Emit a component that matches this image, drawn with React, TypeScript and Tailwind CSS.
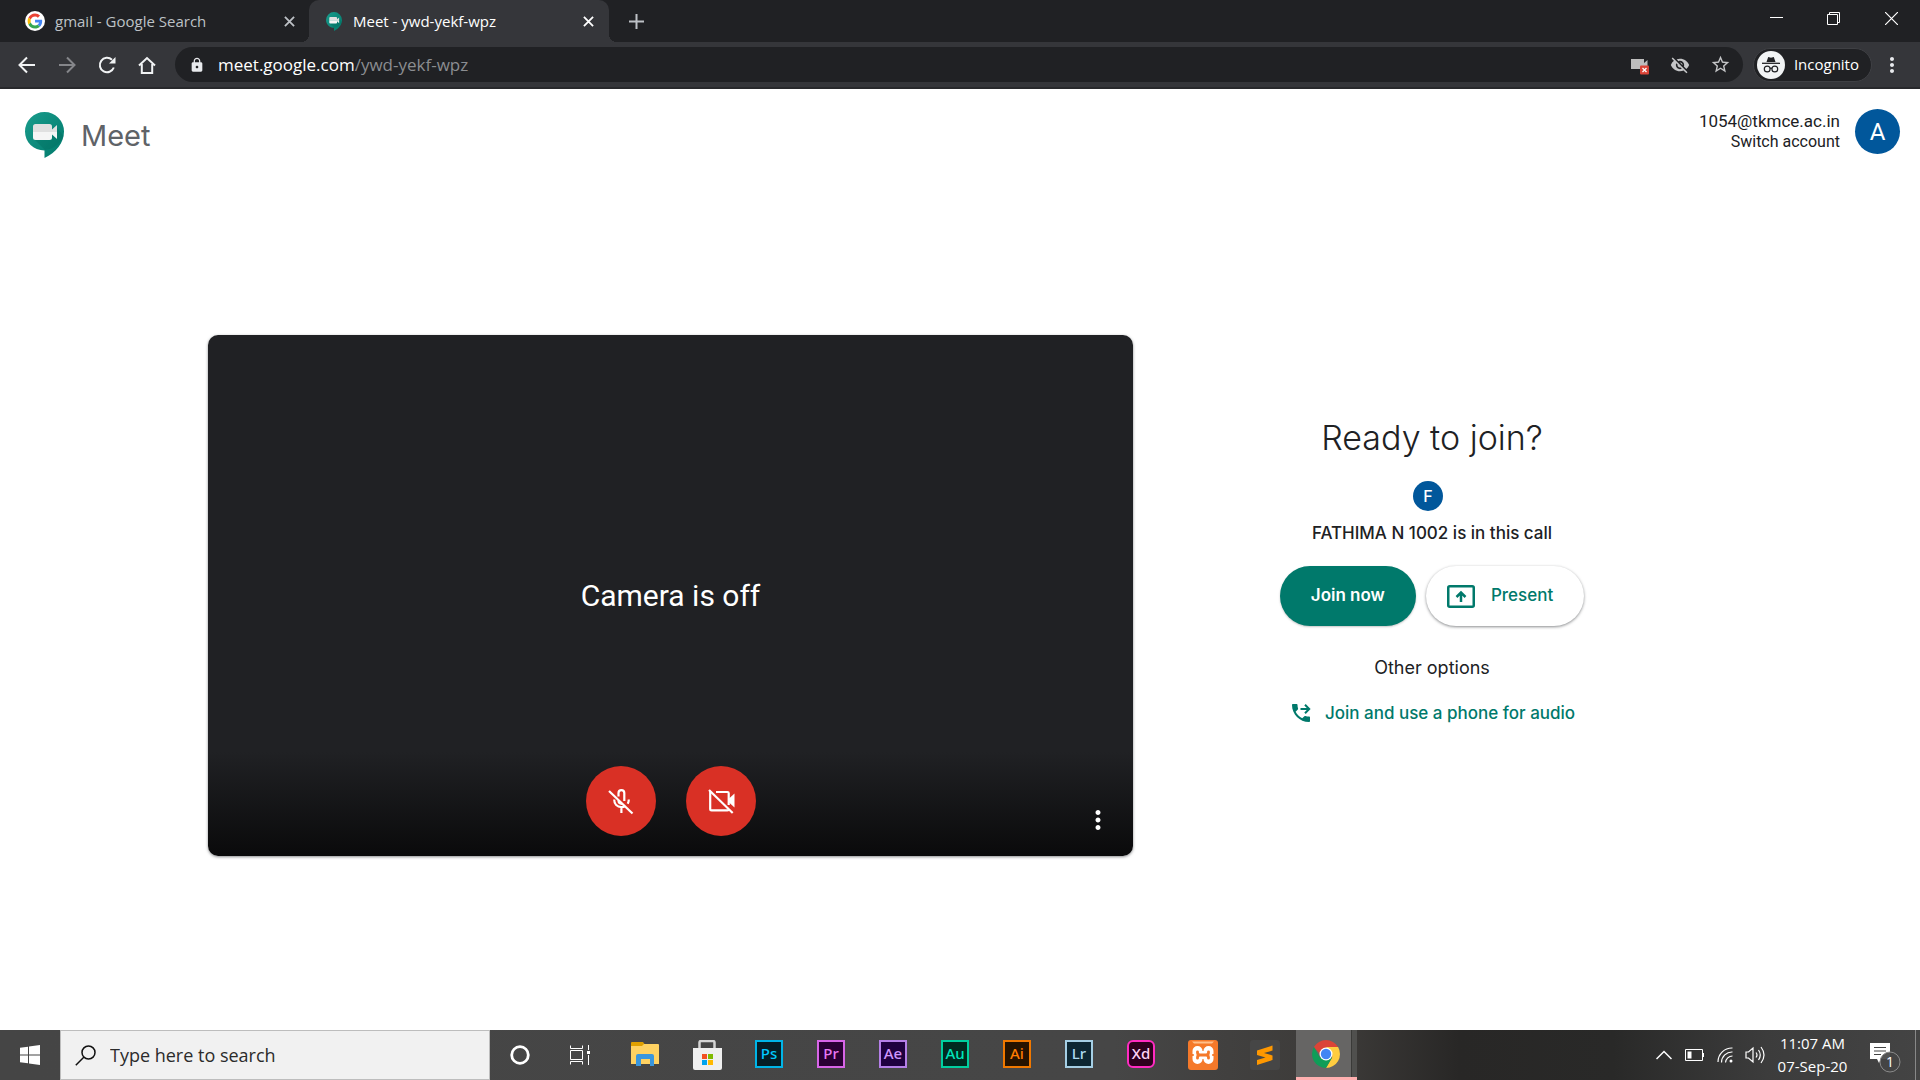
import type { ReactNode } from "react";
import { MdLock, MdStarBorder, MdVisibilityOff, MdMoreVert } from "react-icons/md";

function GoogleG() {
  return (
    <svg viewBox="0 0 20 20" className="size-5 shrink-0" aria-hidden="true">
      <circle cx="10" cy="10" r="10" fill="#fff" />
      <g transform="translate(2.6 2.6) scale(.31)">
        <path fill="#EA4335" d="M24 9.500c3.540 0 6.710 1.220 9.210 3.600l6.850-6.850C35.900 2.380 30.470 0 24 0 14.620 0 6.510 5.380 2.560 13.220l7.980 6.190C12.430 13.720 17.740 9.500 24 9.500z" />
        <path fill="#4285F4" d="M46.980 24.550c0-1.570-.15-3.090-.38-4.550H24v9.020h12.940c-.58 2.960-2.260 5.480-4.780 7.180l7.730 6c4.510-4.180 7.090-10.360 7.090-17.650z" />
        <path fill="#FBBC05" d="M10.530 28.590c-.48-1.450-.76-2.990-.76-4.590s.27-3.140.76-4.590l-7.980-6.190C.92 16.460 0 20.120 0 24s.92 7.540 2.560 10.780l7.970-6.190z" />
        <path fill="#34A853" d="M24 48c6.480 0 11.930-2.130 15.890-5.810l-7.730-6c-2.150 1.450-4.920 2.300-8.160 2.300-6.260 0-11.570-4.220-13.470-9.910l-7.980 6.190C6.510 42.620 14.620 48 24 48z" />
      </g>
    </svg>
  );
}

function MeetLogo({ className }: { className: string }) {
  return (
    <svg viewBox="0 0 39 46" className={className} aria-hidden="true">
      <defs>
        <linearGradient id="bubble" x1="0" y1="0" x2="1" y2="1">
          <stop offset="0" stopColor="#1a9c8c" />
          <stop offset="1" stopColor="#00796b" />
        </linearGradient>
      </defs>
      <path d="M19.500 0A19.500 19.500 0 0 0 0 19.500C0 30 8.500 38.500 19.500 38.500V46C31 40.500 39 31 39 19.500A19.500 19.500 0 0 0 19.500 0z" fill="url(#bubble)" />
      <path d="M9 27l11 11c9-1 16-7 18.500-14l-7-9-5 11z" fill="#00695c" opacity=".35" />
      <path d="M10.500 12h14a2.500 2.500 0 0 1 2.500 2.500v3l5-4.500v7H8v-5.500A2.500 2.500 0 0 1 10.500 12z" fill="#e0e0e0" />
      <path d="M8 20h24v7l-5-4.500v3a2.500 2.500 0 0 1-2.500 2.500h-14A2.500 2.500 0 0 1 8 25.500z" fill="#f5f5f5" />
    </svg>
  );
}

function CloseIcon({ className }: { className: string }) {
  return (
    <svg viewBox="0 0 12 12" className={className} stroke="currentColor" strokeWidth="2" aria-hidden="true">
      <path d="M1 1l10 10M11 1L1 11" />
    </svg>
  );
}

function NavIcon({ children, dim }: { children: ReactNode; dim?: boolean }) {
  return (
    <svg viewBox="0 0 20 20" className={dim ? "size-5 text-[#85868a]" : "size-5 text-[#f1f3f4]"} fill="none" stroke="currentColor" strokeWidth="2" aria-hidden="true">
      {children}
    </svg>
  );
}

function TabStrip() {
  return (
    <div className="flex h-[42px] bg-[#202124]">
      <div className="flex w-[309px] items-center pr-[14px] pl-[25px] text-[15px] text-[#bdc1c6]">
        <GoogleG />
        <span className="ml-[10px] flex-1 leading-5 whitespace-nowrap">gmail - Google Search</span>
        <button aria-label="Close gmail tab"><CloseIcon className="size-[11px]" /></button>
      </div>
      <div className="relative flex w-[300px] items-center rounded-t-[10px] bg-[#35363a] pr-[15px] pl-[17px] text-[15px] text-white">
        <span className="absolute bottom-0 -left-2 size-2 bg-[radial-gradient(circle_at_0_0,#202124_8px,#35363a_8px)]" />
        <span className="absolute -right-2 bottom-0 size-2 bg-[radial-gradient(circle_at_100%_0,#202124_8px,#35363a_8px)]" />
        <MeetLogo className="h-[19px] w-4" />
        <span className="ml-[11px] flex-1 leading-5 whitespace-nowrap">Meet - ywd-yekf-wpz</span>
        <button aria-label="Close Meet tab"><CloseIcon className="size-[11px]" /></button>
      </div>
      <button aria-label="New tab" className="ml-5 text-[#bdc1c6]">
        <svg viewBox="0 0 15 15" className="size-[15px]" stroke="currentColor" strokeWidth="2" aria-hidden="true"><path d="M7.500 0v15M0 7.500h15" /></svg>
      </button>
      <div className="ml-auto flex h-9 text-white">
        <button aria-label="Minimize" className="flex w-[57px] items-center justify-center">
          <svg viewBox="0 0 13 13" className="size-[13px]" stroke="currentColor" aria-hidden="true"><path d="M0 5.500h13" /></svg>
        </button>
        <button aria-label="Restore" className="flex w-[57px] items-center justify-center">
          <svg viewBox="0 0 13 13" className="size-[13px]" fill="none" stroke="currentColor" aria-hidden="true"><path d="M.5 2.500h10v10H.5zM2.500 2.500v-2h10v10h-2" /></svg>
        </button>
        <button aria-label="Close window" className="flex w-[58px] items-center justify-center">
          <svg viewBox="0 0 13 13" className="size-[13px]" stroke="currentColor" strokeWidth="1.200" aria-hidden="true"><path d="M0 0l13 13M13 0L0 13" /></svg>
        </button>
      </div>
    </div>
  );
}

function Toolbar() {
  return (
    <div className="flex h-[47px] items-center border-b-2 border-[#28292c] bg-[#35363a] pr-4 pl-[17px]">
      <div className="flex gap-5">
        <button aria-label="Back"><NavIcon><path d="M18 10H3M10 2.500L2.500 10l7.500 7.500" /></NavIcon></button>
        <button aria-label="Forward"><NavIcon dim><path d="M2 10h15M10 2.500l7.500 7.500-7.500 7.500" /></NavIcon></button>
        <button aria-label="Reload"><NavIcon><path d="M16.800 12.500A7.200 7.200 0 1 1 15 4.800" /><path d="M18.500 2v6.500H12z" fill="currentColor" stroke="none" /></NavIcon></button>
        <button aria-label="Home"><NavIcon><path d="M2 10.500L10 3l8 7.500M4.800 9v9h10.400V9" /></NavIcon></button>
      </div>
      <div className="ml-[18px] flex h-[35px] flex-1 items-center rounded-full bg-[#202124] pr-3 pl-[14px] text-[#c4c5c7]">
        <MdLock className="size-4 text-[#e8eaed]" />
        <div className="ml-[13px] flex-1 text-[17px] text-[#8b8d91]"><span className="text-white">meet.google.com</span>/ywd-yekf-wpz</div>
        <div className="flex items-center gap-5">
          <button aria-label="Camera blocked">
            <svg viewBox="0 0 20 20" className="size-5" aria-hidden="true">
              <path d="M1 4h13v4l3.500-3v9H1z" fill="#bdbdbd" />
              <rect x="10" y="10.500" width="9" height="9" rx="1" fill="#db4437" />
              <path d="M12.500 13l4 4M16.500 13l-4 4" stroke="#fff" strokeWidth="1.300" />
            </svg>
          </button>
          <button aria-label="Third-party cookies blocked"><MdVisibilityOff className="size-5" /></button>
          <button aria-label="Bookmark this page"><MdStarBorder className="size-[21px]" /></button>
        </div>
      </div>
      <button className="ml-[10px] flex h-[34px] items-center rounded-full border border-[#3f4044] bg-[#202124] pr-3 pl-[3px] text-[15px] text-white">
        <svg viewBox="0 0 28 28" className="size-7" aria-hidden="true">
          <circle cx="14" cy="14" r="14" fill="#f1f3f4" />
          <path d="M9.500 11l1.700-5 2.800.8 2.800-.8 1.700 5z" fill="#202124" />
          <path d="M5 12.300h18" stroke="#202124" strokeWidth="1.300" />
          <g fill="none" stroke="#202124" strokeWidth="1.200"><circle cx="10.200" cy="18" r="2.900" /><circle cx="17.800" cy="18" r="2.900" /><path d="M13 17.500q1-.7 2 0" /></g>
        </svg>
        <span className="ml-[9px]">Incognito</span>
      </button>
      <button aria-label="Browser menu" className="ml-2 text-[#e8eaed]"><MdMoreVert className="size-6" /></button>
    </div>
  );
}

function MicOffIcon() {
  return (
    <svg viewBox="0 0 30 30" className="size-[30px]" fill="none" stroke="currentColor" strokeWidth="2.200" aria-hidden="true">
      <path d="M12.500 10.500V7a2.900 2.900 0 0 1 5.800 0v8" />
      <path d="M12.500 14.500c0 2 1.300 3.300 3.500 3.300" />
      <path d="M8.200 13.500c0 4.800 3 7.600 7.200 7.600 1.500 0 2.800-.4 3.800-1.100M15.400 21v6M22.800 13.500c0 1.700-.4 3-1.100 4.200" />
      <path d="M3 5l23.500 22.500" />
    </svg>
  );
}

function CameraOffIcon() {
  return (
    <svg viewBox="0 0 30 30" className="size-[30px]" fill="none" stroke="currentColor" strokeWidth="2.200" aria-hidden="true">
      <path d="M10 6h11.500q1.200 0 1.200 1.200V19" />
      <path d="M4.200 5v18q0 1.400 1.400 1.400h15.600q1 0 1.500-.8" />
      <path d="M22.500 13l6-5.500v14l-6-5.500z" fill="currentColor" stroke="none" />
      <path d="M3 4l23.700 23" />
    </svg>
  );
}

function MeetPage() {
  return (
    <main className="flex flex-1 flex-col bg-white font-['Roboto',sans-serif] text-[#202124]">
      <header className="flex h-[72px] items-start justify-between pr-5 pl-[25px]">
        <div className="flex items-center pt-[22px]">
          <MeetLogo className="h-[46px] w-[39px]" />
          <h1 className="ml-[17px] pt-0.5 font-['Inter',sans-serif] text-[29px] leading-[46px] text-[#5f6368]">Meet</h1>
        </div>
        <div className="flex items-center gap-[15px] pt-5">
          <div className="text-right">
            <div className="text-[17px] leading-[21px]">1054@tkmce.ac.in</div>
            <a href="#switch" className="block text-base leading-5">Switch account</a>
          </div>
          <button aria-label="Account" className="size-[45px] rounded-full bg-[#01579b] text-[24px] text-white">A</button>
        </div>
      </header>
      <section className="flex flex-1 items-center pr-[189px] pl-[208px]">
        <div className="relative flex aspect-[925/521] flex-1 items-center justify-center rounded-[10px] bg-[linear-gradient(to_bottom,#202124_80%,#0a0a0b)] shadow-[0_1px_3px_rgba(60,64,67,.6)]">
          <p className="text-[30px] text-white">Camera is off</p>
          <div className="absolute inset-x-0 bottom-5 flex justify-center gap-[30px] text-white">
            <button aria-label="Turn on microphone" className="flex size-[70px] items-center justify-center rounded-full bg-[#d93025]"><MicOffIcon /></button>
            <button aria-label="Turn on camera" className="flex size-[70px] items-center justify-center rounded-full bg-[#d93025]"><CameraOffIcon /></button>
          </div>
          <button aria-label="More options" className="absolute right-5 bottom-[21px] text-white"><MdMoreVert className="size-[30px]" /></button>
        </div>
        <div className="flex w-[598px] flex-col items-center pb-[50px] font-['Inter',sans-serif] text-[17px] font-medium">
          <h2 className="text-[34px] leading-[44px] font-light">Ready to join?</h2>
          <div className="mt-[21px] mr-2 flex size-[30px] items-center justify-center rounded-full bg-[#01579b] text-base text-white">F</div>
          <p className="mt-[10px] leading-6">FATHIMA N 1002 is in this call</p>
          <div className="mt-[21px] flex gap-[10px]">
            <button className="h-[60px] rounded-full bg-[#00796b] px-[31px] font-semibold text-white shadow-[0_1px_2px_rgba(60,64,67,.3)]">Join now</button>
            <button className="flex h-[60px] items-center rounded-full pr-[31px] pl-[21px] text-[#00796b] shadow-[0_1px_3px_rgba(60,64,67,.6)]">
              <svg viewBox="0 0 28 23" className="h-[23px] w-7" fill="none" stroke="currentColor" strokeWidth="2.500" aria-hidden="true">
                <rect x="1.250" y="1.250" width="25.500" height="20.500" rx="1.500" />
                <path d="M14 17V8.500M9.500 12L14 7.500l4.500 4.500" />
              </svg>
              <span className="ml-4">Present</span>
            </button>
          </div>
          <p className="mt-[30px] text-lg leading-6 font-normal">Other options</p>
          <button className="mt-[21px] flex items-center leading-6 text-[#00796b]">
            <svg viewBox="0 0 24 24" className="size-6" fill="currentColor" aria-hidden="true">
              <path d="M20 15.500c-1.250 0-2.450-.2-3.570-.57-.35-.11-.74-.03-1.020.24l-2.200 2.200c-2.830-1.440-5.150-3.750-6.590-6.580l2.200-2.210c.28-.27.36-.66.250-1.010C8.700 6.450 8.500 5.250 8.500 4c0-.55-.45-1-1-1H4c-.55 0-1 .45-1 1 0 9.390 7.610 17 17 17 .55 0 1-.45 1-1v-3.500c0-.55-.45-1-1-1z" />
              <path d="M11.500 8h8M16 3.800L20.200 8 16 12.200" fill="none" stroke="currentColor" strokeWidth="2" />
            </svg>
            <span className="ml-3">Join and use a phone for audio</span>
          </button>
        </div>
      </section>
    </main>
  );
}

function Adobe({ label, tone }: { label: string; tone: string }) {
  return <span className={`flex size-7 items-center justify-center border-2 font-['Noto_Sans',sans-serif] text-[15px] leading-none font-medium ${tone}`}>{label}</span>;
}

const adobeApps = [
  { label: "Ps", tone: "border-[#00b5e8] bg-[#061e26] text-[#00c8ff]" },
  { label: "Pr", tone: "border-[#d865e8] bg-[#2a0034] text-[#e878f5]" },
  { label: "Ae", tone: "border-[#b57fe8] bg-[#1f0040] text-[#cf96fd]" },
  { label: "Au", tone: "border-[#00cf9f] bg-[#002a20] text-[#00e4bb]" },
  { label: "Ai", tone: "border-[#f07800] bg-[#261300] text-[#ff7c00]" },
  { label: "Lr", tone: "border-[#a5cfe5] bg-[#0d2733] text-[#addbf0]" },
  { label: "Xd", tone: "rounded-[6px] border-[#ff2bc2] bg-[#2e001e] text-[#ffd4f5]" },
];

function TaskIcon({ name, children }: { name: string; children: ReactNode }) {
  return <button aria-label={name} className="flex w-[62px] items-center justify-center pb-[3px]">{children}</button>;
}

function Taskbar() {
  return (
    <footer className="flex h-[50px] bg-[linear-gradient(to_right,#454545_0%,#464646_58%,#3c3a38_70%,#282726_76%,#292928_84%,#3c3c3c_92%,#444_100%)] text-white">
      <button aria-label="Start" className="flex w-[60px] items-center justify-center">
        <svg viewBox="0 0 20 20" className="size-5" fill="currentColor" aria-hidden="true"><path d="M0 2.800L8 1.700v7.800H0zM9 1.500L20 0v9.500H9zM0 10.500h8v7.800l-8-1.100zM9 10.500h11V20L9 18.500z" /></svg>
      </button>
      <label className="flex w-[430px] items-center border border-[#bdbdbd] bg-[#f1f1f1] pl-[14px] text-[#222]">
        <svg viewBox="0 0 21 21" className="size-[21px]" fill="none" stroke="#111" strokeWidth="1.500" aria-hidden="true"><circle cx="13.500" cy="7.500" r="6.500" /><path d="M9 12L.8 20.200" /></svg>
        <input type="text" aria-label="Search Windows" placeholder="Type here to search" className="ml-[14px] flex-1 bg-transparent text-[18px] outline-none placeholder:text-[#2b2b2b]" />
      </label>
      <button aria-label="Cortana" className="flex w-[60px] items-center justify-center">
        <svg viewBox="0 0 20 20" className="size-5" fill="none" stroke="currentColor" strokeWidth="2.800" aria-hidden="true"><circle cx="10" cy="10" r="8.300" /></svg>
      </button>
      <button aria-label="Task view" className="flex w-[60px] items-center justify-center">
        <svg viewBox="0 0 20 20" className="size-5" fill="none" stroke="currentColor" aria-hidden="true"><path d="M.5.500v3h12v-3M.5 5.500h12v9H.5zM.5 19.500v-3h12v3M18.500 0v5M18.500 10v10" /><path d="M17 6h3v3h-3z" fill="currentColor" stroke="none" /></svg>
      </button>
      <div className="ml-1 flex">
        <TaskIcon name="File Explorer">
          <svg viewBox="0 0 28 24" className="h-6 w-7" aria-hidden="true"><path d="M0 1q0-1 1-1h11l1.500 2v4H0z" fill="#e0a000" /><path d="M0 4h11l2-2h14q1 0 1 1v19H0z" fill="#ffd262" /><path d="M5 24V14q0-2 2-2h14q2 0 2 2v10h-4v-7h-9v7z" fill="#3a96dd" /></svg>
        </TaskIcon>
        <TaskIcon name="Microsoft Store">
          <svg viewBox="0 0 30 30" className="mt-[3px] size-[30px]" aria-hidden="true"><path d="M7.500 9V2.500q0-1.500 1.500-1.500h12q1.500 0 1.500 1.500V9" fill="none" stroke="#d5d5d5" strokeWidth="2.500" /><path d="M1 8h29v20q0 2-2 2H3q-2 0-2-2z" fill="#efefef" /><path d="M10 14h5v5h-5z" fill="#f25022" /><path d="M16 14h5v5h-5z" fill="#7fba00" /><path d="M10 20h5v5h-5z" fill="#00a4ef" /><path d="M16 20h5v5h-5z" fill="#ffb900" /></svg>
        </TaskIcon>
        {adobeApps.map((app) => (
          <TaskIcon key={app.label} name={app.label}><Adobe label={app.label} tone={app.tone} /></TaskIcon>
        ))}
        <TaskIcon name="XAMPP">
          <svg viewBox="0 0 30 30" className="mt-[3px] size-[30px]" fill="none" strokeLinecap="round" aria-hidden="true">
            <rect width="30" height="30" rx="3" fill="#f5792a" />
            <path d="M4 1.500h22l-2 2H6z" fill="#ffc08a" />
            <path d="M9.500 11v8M20.500 11v8" stroke="#fff" strokeWidth="10" />
            <path d="M11 15h8" stroke="#fff" strokeWidth="8" />
            <path d="M9.500 11.800v.7q0 2.500 2.500 2.500h6q2.500 0 2.500-2.500v-.7M9.500 18.200v-.7q0-2.500 2.500-2.500M20.500 18.200v-.7q0-2.500-2.500-2.500" stroke="#f5792a" strokeWidth="2.800" />
            <path d="M3.500 15h1.500M25 15h1.500" stroke="#f5792a" strokeWidth="2" />
          </svg>
        </TaskIcon>
        <TaskIcon name="Sublime Text">
          <svg viewBox="0 0 30 30" className="mt-[3px] size-[30px]" aria-hidden="true"><rect width="30" height="30" rx="3" fill="#464646" /><path d="M7 10.500L22.500 5.500v5L14 13l8.500 2.500v4.500L7 25v-5l8.500-2.500L7 15z" fill="#ff9800" /></svg>
        </TaskIcon>
      </div>
      <button aria-label="Google Chrome" className="flex w-[61px] border-b-[3px] border-[#ffb0b0] bg-[#50504e]">
        <span className="flex h-full w-[56px] items-center justify-center border-r border-[#3a3a38] bg-[#666564] pl-1">
          <svg viewBox="0 0 28 28" className="size-7" aria-hidden="true"><path d="M1.900 7A14 14 0 0 1 26.100 7H14v7H7.900z" fill="#db4437" /><path d="M26.100 7A14 14 0 0 1 14 28l6.100-10.500V14L14 7z" fill="#ffcd40" /><path d="M1.900 7A14 14 0 0 0 14 28l6.100-10.500L14 20l-6.100-2.500z" fill="#0f9d58" /><circle cx="14" cy="14" r="6.500" fill="#fff" /><circle cx="14" cy="14" r="5.200" fill="#4285f4" /></svg>
        </span>
      </button>
      <div className="ml-auto flex items-center">
        <button aria-label="Show hidden icons"><svg viewBox="0 0 16 10" className="h-[10px] w-4" fill="none" stroke="currentColor" strokeWidth="1.500" aria-hidden="true"><path d="M.5 9L8 1.500 15.500 9" /></svg></button>
        <svg viewBox="0 0 19 12" className="ml-[13px] h-3 w-[19px]" fill="none" stroke="currentColor" aria-hidden="true"><path d="M.5.500h17v11H.5zM18.500 4v4" /><path d="M2.500 2.500h4v7h-4z" fill="currentColor" stroke="none" /></svg>
        <svg viewBox="0 0 16 16" className="ml-[13px] size-4" fill="none" stroke="currentColor" strokeWidth="1.200" aria-hidden="true"><path d="M1 15A14 14 0 0 1 15.500 1M4.500 15.500A10.500 10.500 0 0 1 15.500 5M8.500 15.500A7 7 0 0 1 15.500 9" /><circle cx="14" cy="14" r="1.500" fill="currentColor" stroke="none" /></svg>
        <svg viewBox="0 0 21 18" className="ml-3 h-[18px] w-[21px]" fill="none" stroke="currentColor" strokeWidth="1.200" aria-hidden="true"><path d="M1 6h2.500L8 2v14l-4.500-4H1zM11 6.500q2 2.500 0 5M13.500 4q3.500 5 0 10M16 1q6 8 0 16" /></svg>
        <div className="ml-[10px] w-[73px] text-center text-[15px] leading-[23px] whitespace-nowrap"><div>11:07 AM</div><div>07-Sep-20</div></div>
        <button aria-label="Notifications, 1 new" className="mr-[13px] ml-[21px] pt-1">
          <svg viewBox="0 0 32 32" className="size-8" aria-hidden="true"><path d="M0 2h20v16h-9l-2 4-2-4H0z" fill="#fff" /><path d="M4 6.500h12M4 10h12M4 13.500h7" stroke="#444" /><circle cx="20" cy="21" r="10" fill="#444" fillOpacity=".92" stroke="#8a8a8a" /><text x="20" y="26" fontSize="14" textAnchor="middle" fill="#fff">1</text></svg>
        </button>
        <div className="h-[50px] w-[5px] border-l border-[#888]" />
      </div>
    </footer>
  );
}

export default function App() {
  return (
    <div className="flex min-h-screen flex-col font-['Open_Sans',sans-serif]">
      <TabStrip />
      <Toolbar />
      <MeetPage />
      <Taskbar />
    </div>
  );
}
